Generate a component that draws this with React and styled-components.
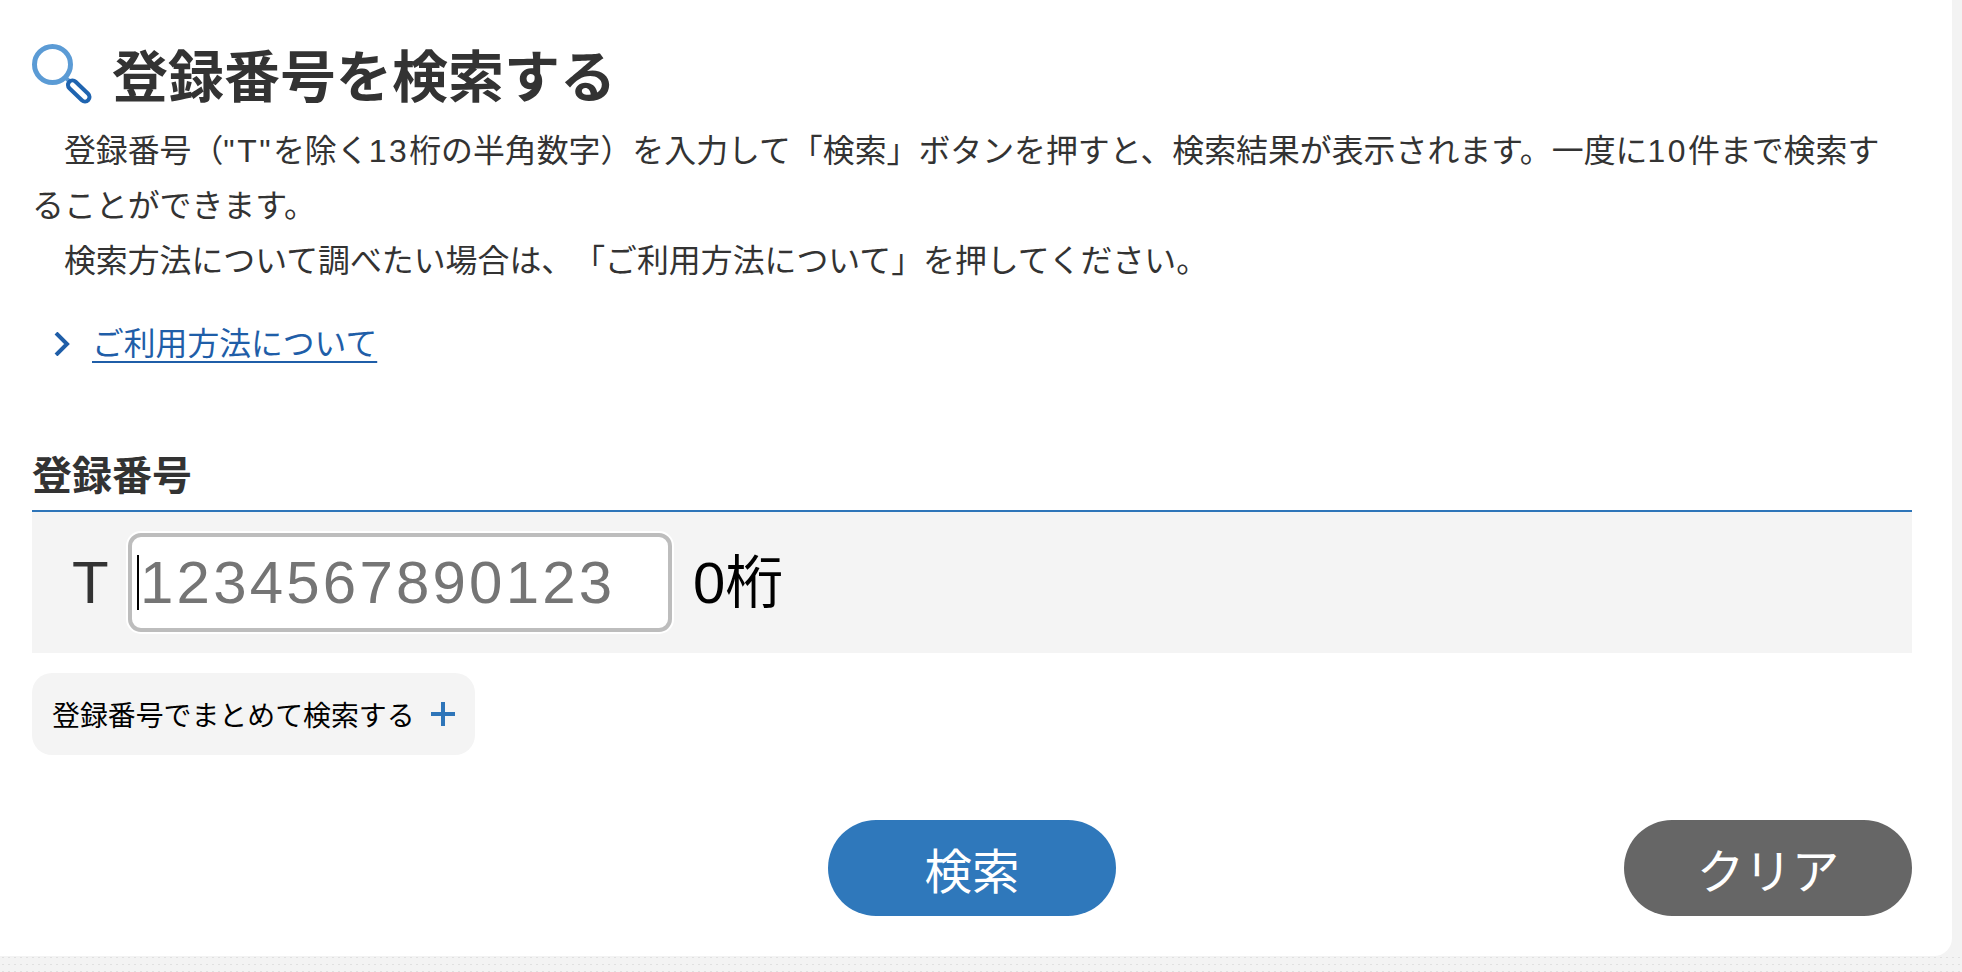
import styled, { createGlobalStyle } from 'styled-components'

const GlobalStyle = createGlobalStyle`
  html, body {
    margin: 0;
    padding: 0;
    height: 100%;
    background-color: #f3f3f3;
    overflow: hidden;
  }
`

const fontStack = `"Liberation Sans", "Noto Sans CJK JP", sans-serif`

const Page = styled.div`
  width: 1962px;
  height: 972px;
  font-family: ${fontStack};
  color: #333;
  text-spacing-trim: space-all;
`

const Card = styled.main`
  box-sizing: border-box;
  width: 1952px;
  height: 956px;
  padding: 44px 40px 0 32px;
  background-color: white;
  border-radius: 0 0 18px 0;
`

const Ground = styled.div`
  height: 16px;
  background-image: radial-gradient(#e0e0e0 0.7px, transparent 0.9px);
  background-size: 6px 7px;
  background-position: 0 5px;
`

const TitleRow = styled.div`
  display: flex;
  align-items: center;
  gap: 20px;
  height: 60px;
`

const Title = styled.h1`
  margin: 8px 0 0;
  font-size: 56px;
  font-weight: 700;
  line-height: 60px;
`

const Lead = styled.p`
  margin: 0;
  padding-right: 10px;
  font-size: 31.9px;
  line-height: 55px;
  text-indent: 1em;
`

const Latin = styled.span`
  letter-spacing: 2.5px;
`

const Intro = styled.div`
  margin-top: 20px;
`

const GuideLink = styled.a`
  display: flex;
  align-items: center;
  gap: 22px;
  margin: 35px 0 0 22px;
  height: 40px;
  font-size: 31.8px;
  line-height: 40px;
  color: #1f5ea8;
  span {
    text-decoration: underline;
    text-underline-offset: 6px;
    text-decoration-thickness: 2px;
  }
`

const FieldLabel = styled.label`
  display: block;
  margin-top: 83px;
  padding-bottom: 5px;
  font-size: 40px;
  font-weight: 700;
  line-height: 58px;
  border-bottom: 2px solid #2e75b9;
`

const FieldRow = styled.div`
  display: flex;
  align-items: center;
  height: 141px;
  padding-left: 40px;
  background-color: #f4f4f4;
`

const Prefix = styled.span`
  width: 56px;
  font-size: 60px;
  line-height: 1;
  color: #333;
`

const InputWrap = styled.div`
  position: relative;
  box-sizing: border-box;
  width: 544px;
  height: 99px;
  background-color: white;
  border: 4px solid #bdbdbd;
  border-radius: 13px;
  box-shadow: 0 0 0 2px white;
`

const Caret = styled.i`
  position: absolute;
  left: 5px;
  top: 18px;
  width: 2px;
  height: 55px;
  background-color: black;
`

const NumberInput = styled.input`
  box-sizing: border-box;
  width: 100%;
  height: 100%;
  padding: 0 0 0 8px;
  border: 0;
  outline: 0;
  background: transparent;
  font-family: ${fontStack};
  font-size: 60px;
  letter-spacing: 3.2px;
  &::placeholder {
    color: #757575;
    opacity: 1;
  }
`

const Count = styled.span`
  margin-left: 21px;
  font-size: 58px;
  line-height: 1;
  color: black;
`

const BulkToggle = styled.button`
  display: flex;
  align-items: center;
  gap: 16px;
  box-sizing: border-box;
  width: 443px;
  height: 82px;
  margin-top: 20px;
  padding: 0 0 0 20px;
  border: 0;
  border-radius: 20px;
  background-color: #f4f4f4;
  font-family: inherit;
  font-size: 27.9px;
  color: black;
`

const Actions = styled.div`
  display: grid;
  grid-template-columns: 1fr auto 1fr;
  margin-top: 65px;
`

const PillButton = styled.button`
  grid-column: ${(p) => p.$column};
  justify-self: ${(p) => (p.$column === 3 ? 'end' : 'center')};
  width: 288px;
  height: 96px;
  border: 0;
  border-radius: 48px;
  background-color: ${(p) => p.$color};
  font-family: inherit;
  font-size: 47.5px;
  color: white;
`

function LensIcon() {
  return (
    <svg width="60" height="60" viewBox="0 0 60 60" fill="none">
      <circle cx="20.5" cy="20.5" r="18" stroke="#5b9bd5" strokeWidth="5" />
      <path d="M33 33 L37 37" stroke="#5b9bd5" strokeWidth="4" />
      <path d="M40.5 41 L53 53" stroke="#1f64b0" strokeWidth="13" strokeLinecap="round" />
      <path d="M40.5 41 L53 53" stroke="white" strokeWidth="5" strokeLinecap="round" />
    </svg>
  )
}

function Chevron() {
  return (
    <svg width="16" height="24" viewBox="0 0 16 24" fill="none">
      <path d="M2 1 L13 12 L2 23" stroke="#1f5ea8" strokeWidth="4" />
    </svg>
  )
}

function PlusIcon() {
  return (
    <svg width="24" height="24" viewBox="0 0 24 24">
      <path d="M0 12 H24 M12 0 V24" stroke="#2e75b9" strokeWidth="4" />
    </svg>
  )
}

export default function App() {
  return (
    <Page>
      <GlobalStyle />
      <Card>
        <TitleRow>
          <LensIcon />
          <Title>登録番号を検索する</Title>
        </TitleRow>
        <Intro>
          <Lead>登録番号（<Latin>"T"</Latin>を除く<Latin>13</Latin>桁の半角数字）を入力して「検索」ボタンを押すと、検索結果が表示されます。一度に<Latin>10</Latin>件まで検索することができます。</Lead>
          <Lead>検索方法について調べたい場合は、「ご利用方法について」を押してください。</Lead>
        </Intro>
        <GuideLink>
          <Chevron />
          <span>ご利用方法について</span>
        </GuideLink>
        <FieldLabel>登録番号</FieldLabel>
        <FieldRow>
          <Prefix>T</Prefix>
          <InputWrap>
            <NumberInput placeholder="1234567890123" readOnly />
            <Caret />
          </InputWrap>
          <Count>0桁</Count>
        </FieldRow>
        <BulkToggle>
          登録番号でまとめて検索する
          <PlusIcon />
        </BulkToggle>
        <Actions>
          <PillButton $column={2} $color="#2f78bb">検索</PillButton>
          <PillButton $column={3} $color="#666666">クリア</PillButton>
        </Actions>
      </Card>
      <Ground />
    </Page>
  )
}
